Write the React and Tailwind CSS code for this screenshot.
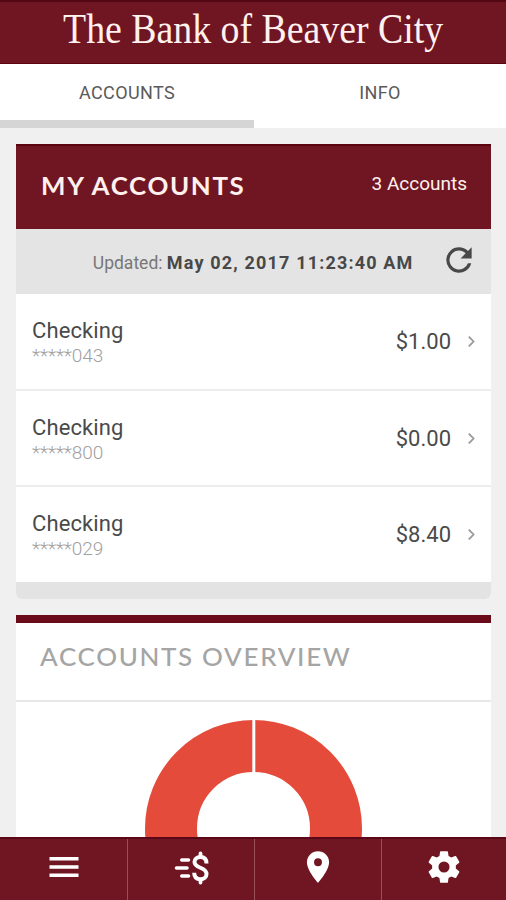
import React from "react";

const accounts = [
  { name: "Checking", number: "*****043", balance: "$1.00" },
  { name: "Checking", number: "*****800", balance: "$0.00" },
  { name: "Checking", number: "*****029", balance: "$8.40" },
];

const Icon = ({ children }) => (
  <svg viewBox="0 0 24 24" className="block h-[38px] w-[38px] shrink-0" fill="currentColor">
    {children}
  </svg>
);

function AccountRow({ account, last }) {
  return (
    <li className={"flex items-center justify-between pl-4 pr-[15px] " + (last ? "h-[95px] pb-[2px]" : "h-[96.5px] border-b-2 border-[#ececec]")}>
      <div className="flex flex-col pt-1">
        <span className="text-[22px] leading-[25px] tracking-[0.1px] text-[#4a4a4a]">{account.name}</span>
        <span className="text-[19px] font-light leading-[25px] tracking-[-0.1px] text-[#a0a0a0]">{account.number}</span>
      </div>
      <div className="flex items-center gap-4 pt-0.5">
        <span className="text-[22px] leading-6 text-[#4a4a4a]">{account.balance}</span>
        <svg viewBox="0 0 10 14" className="mb-px h-[13px] w-[9px]" fill="none" stroke="#999" strokeWidth="2">
          <path d="M2 1.5L7.3 7L2 12.5" />
        </svg>
      </div>
    </li>
  );
}

export default function App() {
  return (
    <div className="flex h-[900px] w-[506px] flex-col overflow-hidden bg-[#f0f0f0] font-['Roboto',sans-serif]">
      <header className="flex h-16 shrink-0 justify-center border-b border-t-2 border-b-[#5b0411] border-t-[#520713] bg-[#701622]">
        <h1 className="origin-center scale-x-[0.9] whitespace-nowrap font-['Liberation_Serif',serif] text-[42px] leading-[54px] text-[#fff1ee]">
          The Bank of Beaver City
        </h1>
      </header>

      <nav className="grid h-16 shrink-0 grid-cols-[254px_252px] grid-rows-[64px] bg-white text-center text-[18px] leading-[58px] text-[#5a5a5a]">
        <div className="border-b-8 border-[#d5d5d5] tracking-[0.4px]">ACCOUNTS</div>
        <div className="tracking-[0.3px]">INFO</div>
      </nav>

      <main className="flex min-h-0 flex-1 flex-col gap-4 overflow-hidden pl-4 pr-[15px] pt-4">
        <section className="shrink-0 overflow-hidden rounded-b-[6px] bg-white">
          <div className="flex h-[85px] justify-between border-t-2 border-[#5b0411] bg-[#701622] px-6 text-[#fff1ee]">
            <h2 className="origin-left scale-x-[1.035] whitespace-nowrap pl-px font-['Lato',sans-serif] text-[25px] font-bold leading-[78px] tracking-[1.6px]">MY ACCOUNTS</h2>
            <span className="text-[19px] leading-[75px]">3 Accounts</span>
          </div>
          <div className="flex h-[65px] items-center justify-end gap-[26px] bg-[#e4e4e4] pr-[13.5px] text-[#484848]">
            <p className="pt-[3px] text-[18px] leading-6">
              <span className="text-[17.5px] text-[#777]">Updated: </span>
              <b className="tracking-[1.17px]">May 02, 2017 11:23:40 AM</b>
            </p>
            <div className="pb-[3px]">
              <Icon>
                <path d="M17.65 6.35A7.96 7.96 0 0 0 12 4a8 8 0 1 0 7.73 10h-2.08A6 6 0 1 1 12 6c1.66 0 3.14.69 4.22 1.78L13 11h7V4z" />
              </Icon>
            </div>
          </div>
          <ul>
            {accounts.map((a, i) => (
              <AccountRow key={a.number} account={a} last={i === accounts.length - 1} />
            ))}
          </ul>
          <div className="h-[17px] bg-[#e3e3e3]" />
        </section>

        <section className="shrink-0 border-t-8 border-[#6b0a18] bg-white">
          <div className="h-[79px] border-b-2 border-[#e8e8e8] px-6">
            <h2 className="w-fit origin-left scale-x-[1.04] whitespace-nowrap font-['Lato',sans-serif] text-[25px] font-medium leading-[66px] tracking-[1.6px] text-[#a5a5a5]">ACCOUNTS OVERVIEW</h2>
          </div>
          <div className="flex justify-center pt-[18px]">
            <svg viewBox="0 0 217 217" className="h-[217px] w-[217px]">
              <circle cx="108.5" cy="108.5" r="82.5" fill="none" stroke="#e54b3a" strokeWidth="52" />
              <path d="M108.8 0V54" stroke="#fff" strokeWidth="3" />
            </svg>
          </div>
        </section>
      </main>

      <footer className="grid h-[63px] shrink-0 grid-cols-[128px_127px_127px_124px] divide-x divide-[#99505a] border-t-2 border-[#5b0718] bg-[#701622] text-white">
        <div className="flex items-center justify-center pb-[5px]">
          <svg viewBox="0 0 30 20" className="h-5 w-[30px]" fill="currentColor">
            <path d="M.5 0h29v3.5H.5zM.5 8.2h29v3.5H.5zM.5 16.4h29v3.5H.5z" />
          </svg>
        </div>
        <div className="flex items-center justify-center pb-[4px]">
          <svg viewBox="0 0 36 34" className="h-[34px] w-9" fill="none" stroke="currentColor">
            <path strokeWidth="3.6" strokeLinecap="round" d="M8.8 9H15.5M3.5 17H14M8.8 25H15.5" />
            <path strokeWidth="3.8" strokeLinecap="round" d="M27.5 2.4V5M27.5 29V31.6" />
            <path strokeWidth="4" d="M33.5 12.5C33.5 8 31 6 27.5 6C23.7 6 21.5 8.2 21.5 11C21.5 18 33.5 15.5 33.5 23C33.5 26.2 31 28.2 27.5 28.2C23.5 28.2 21.2 25.8 21.2 21.8" />
          </svg>
        </div>
        <div className="flex items-center justify-center pb-[5px]">
          <Icon>
            <path d="M12 2a7 7 0 0 0-7 7c0 5.25 7 13 7 13s7-7.75 7-13a7 7 0 0 0-7-7zm0 9.5a2.5 2.5 0 1 1 0-5 2.5 2.5 0 0 1 0 5z" />
          </Icon>
        </div>
        <div className="flex items-center justify-center pb-[5px]">
          <Icon>
            <path d="M19.43 12.98c.04-.32.07-.64.07-.98s-.03-.66-.07-.98l2.11-1.65c.19-.15.24-.42.12-.64l-2-3.46c-.12-.22-.39-.3-.61-.22l-2.49 1c-.52-.4-1.08-.73-1.69-.98l-.38-2.65A.49.49 0 0 0 14 2h-4c-.25 0-.46.18-.49.42l-.38 2.65c-.61.25-1.17.59-1.69.98l-2.49-1c-.23-.09-.49 0-.61.22l-2 3.46c-.13.22-.07.49.12.64l2.11 1.65c-.04.32-.07.65-.07.98s.03.66.07.98l-2.11 1.65c-.19.15-.24.42-.12.64l2 3.46c.12.22.39.3.61.22l2.49-1c.52.4 1.08.73 1.69.98l.38 2.65c.03.24.24.42.49.42h4c.25 0 .46-.18.49-.42l.38-2.65c.61-.25 1.17-.59 1.69-.98l2.49 1c.23.09.49 0 .61-.22l2-3.46c.12-.22.07-.49-.12-.64l-2.11-1.65zM12 15.5a3.5 3.5 0 1 1 0-7 3.5 3.5 0 0 1 0 7z" />
          </Icon>
        </div>
      </footer>
    </div>
  );
}
